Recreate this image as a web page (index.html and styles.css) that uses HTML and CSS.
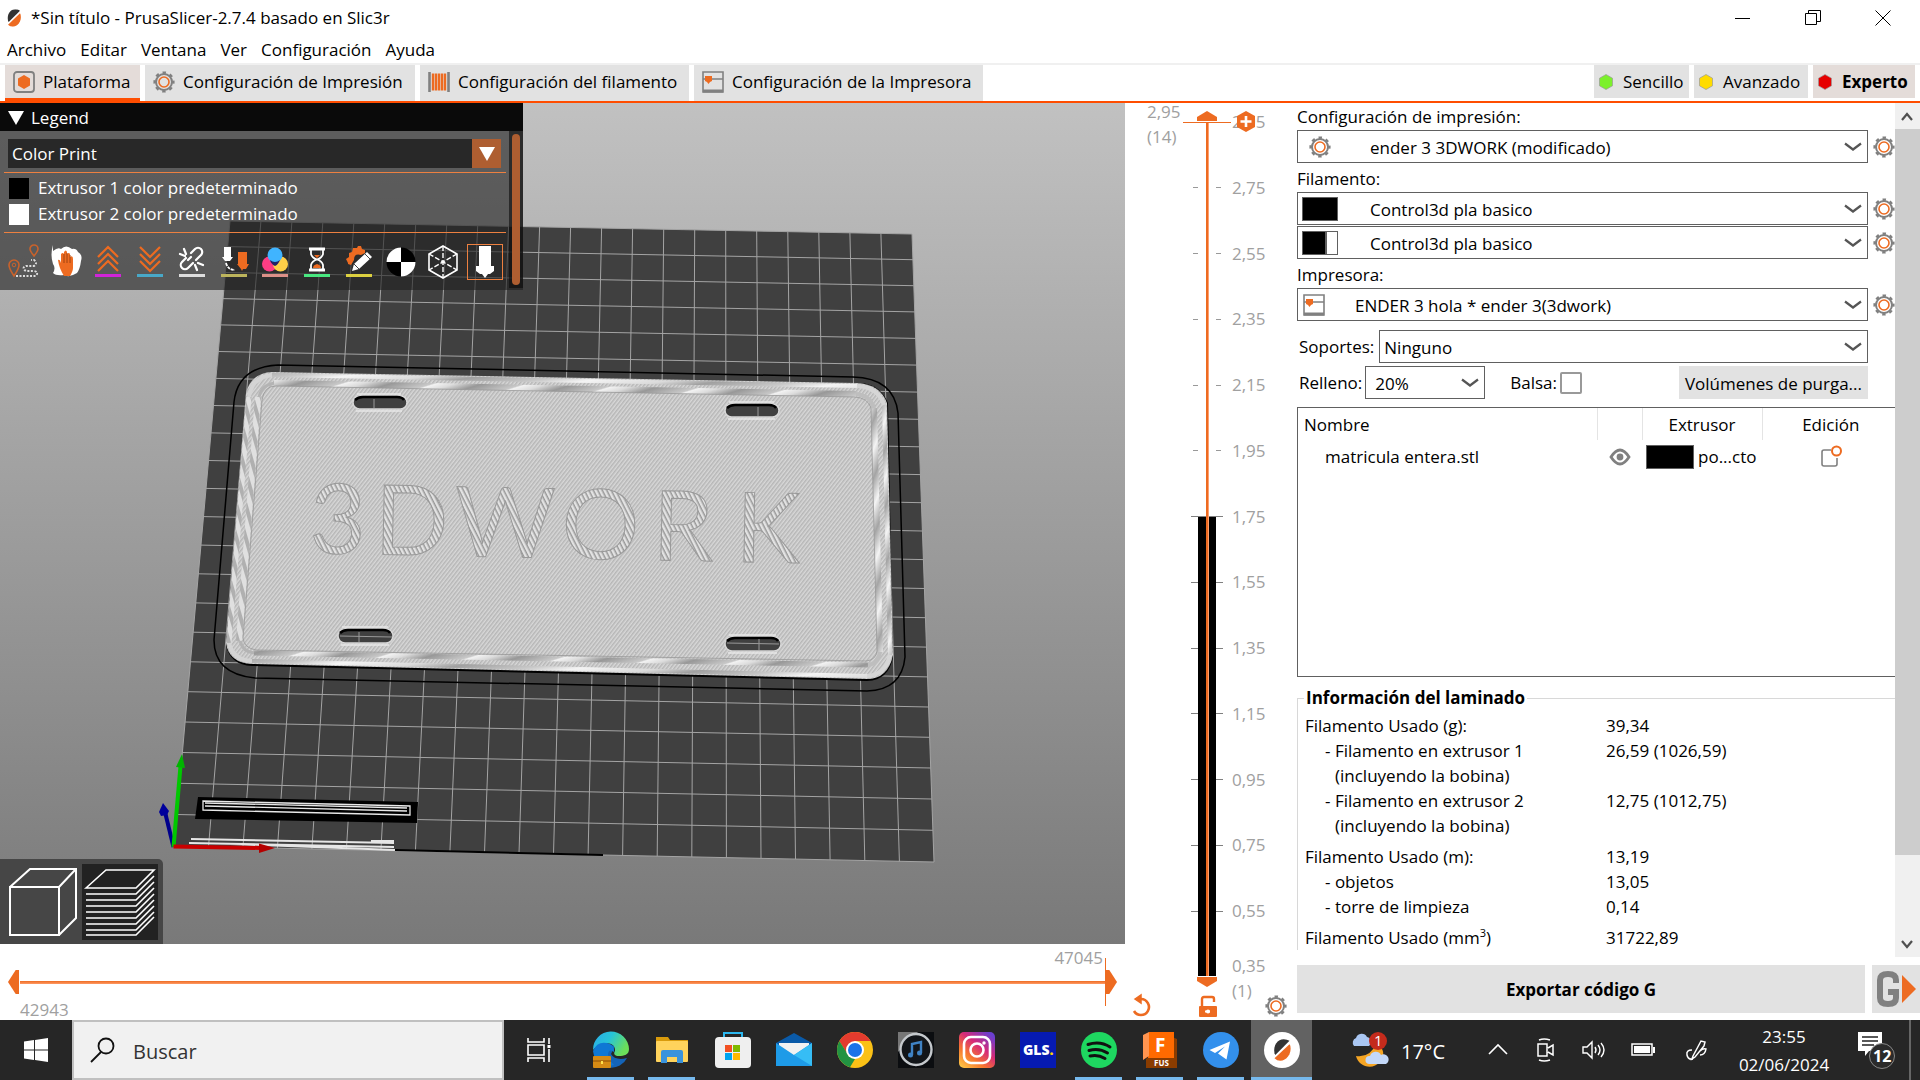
FILE: index.html
```html
<!DOCTYPE html>
<html lang="es">
<head>
<meta charset="utf-8">
<title>*Sin título - PrusaSlicer-2.7.4 basado en Slic3r</title>
<link rel="stylesheet" href="styles.css">
</head>
<body>
<svg class="defs" width="0" height="0" aria-hidden="true">
  <symbol id="gear" viewBox="0 0 22 22">
    <circle cx="11" cy="11" r="8" fill="none" stroke="#808080" stroke-width="2"/>
    <circle cx="11" cy="11" r="9.4" fill="none" stroke="#808080" stroke-width="2.4" stroke-dasharray="3.4 3.98" stroke-dashoffset="1.7"/>
    <circle cx="11" cy="11" r="5" fill="none" stroke="#ed6b21" stroke-width="1.6"/>
  </symbol>
  <symbol id="printer" viewBox="0 0 22 22">
    <path d="M1 1h20v20H1zM1 8h20" fill="none" stroke="#808080" stroke-width="1.6"/>
    <path d="M1 20h20" stroke="#808080" stroke-width="3"/>
    <path d="M3 5h7v5l-2 1-1.500 2-1.500-2-2-1z" fill="#ed6b21"/>
  </symbol>
  <symbol id="chevron" viewBox="0 0 18 10">
    <path d="M1 1.500l8 6 8-6" fill="none" stroke="#555" stroke-width="2.200"/>
  </symbol>
  <symbol id="hex" viewBox="0 0 14 16">
    <path d="M7 .5l6.500 3.700v7.600L7 15.500.5 11.800V4.200z" fill="currentColor" stroke="#999" stroke-width=".7"/>
  </symbol>
  <symbol id="prusa" viewBox="0 0 24 26">
    <path d="M3 17C1 7 7 0 14 0q4 0 7 2L4 19z" fill="#333"/>
    <path d="M22 8C24 18 17 26 10 26q-4 0-7-3L21 6z" fill="#ed6b21"/>
  </symbol>
</svg>

<header class="titlebar">
  <svg class="app-icon" viewBox="0 0 24 26"><use href="#prusa"/></svg>
  <h1 class="title">*Sin título - PrusaSlicer-2.7.4 basado en Slic3r</h1>
  <div class="window-buttons">
    <button class="win-btn" aria-label="Minimizar"><svg width="16" height="16"><path d="M0 8.500h15" stroke="#000"/></svg></button>
    <button class="win-btn" aria-label="Restaurar"><svg width="16" height="16"><path d="M.5 3.500h11v11H.5zM3.500 3.500v-3h12v11h-3.500" fill="none" stroke="#000"/></svg></button>
    <button class="win-btn" aria-label="Cerrar"><svg width="16" height="16"><path d="M.5.500l15 15M15.500.500l-15 15" stroke="#000"/></svg></button>
  </div>
</header>

<nav class="menubar">
  <a href="#">Archivo</a><a href="#">Editar</a><a href="#">Ventana</a><a href="#">Ver</a><a href="#">Configuración</a><a href="#">Ayuda</a>
</nav>

<nav class="tabs">
  <button class="tab tab-plater active">
    <svg class="ico" viewBox="0 0 22 22"><rect x="1" y="1" width="20" height="20" rx="3" fill="none" stroke="#808080" stroke-width="1.800"/><path d="M11 4l6 3.500v7L11 18l-6-3.500v-7z" fill="#ed6b21"/></svg>
    Plataforma</button>
  <button class="tab tab-print"><svg class="ico"><use href="#gear"/></svg>Configuración de Impresión</button>
  <button class="tab tab-filament">
    <svg class="ico" viewBox="0 0 22 22"><path d="M1.500 1v20M20.500 1v20" stroke="#808080" stroke-width="2.600"/><path d="M5 2.500v17M8 2.500v17M11 2.500v17M14 2.500v17M17 2.500v17" stroke="#ed6b21" stroke-width="2.400"/></svg>
    Configuración del filamento</button>
  <button class="tab tab-printer"><svg class="ico"><use href="#printer"/></svg>Configuración de la Impresora</button>
  <div class="modes">
    <button class="mode simple"><svg class="hex"><use href="#hex"/></svg>Sencillo</button>
    <button class="mode advanced"><svg class="hex"><use href="#hex"/></svg>Avanzado</button>
    <button class="mode expert active"><svg class="hex"><use href="#hex"/></svg>Experto</button>
  </div>
</nav>

<main class="workspace">
  <div class="stage">
    <section class="viewport">
      <svg class="scene" viewBox="0 103 1125 841" preserveAspectRatio="xMinYMin slice">
        <defs>
          <linearGradient id="sky" x1="0" y1="0" x2="0" y2="1"><stop offset="0" stop-color="#c1c1c1"/><stop offset="1" stop-color="#797979"/></linearGradient>
          <pattern id="infill" width="3" height="3" patternUnits="userSpaceOnUse" patternTransform="rotate(-52)">
            <rect width="3" height="3" fill="#d8d8d8"/><rect width="3" height="1.500" fill="#b6b6b6"/>
          </pattern>
          <pattern id="letter" width="4" height="4" patternUnits="userSpaceOnUse" patternTransform="rotate(62)">
            <rect width="4" height="4" fill="#e2e2e2"/><rect width="4" height="1.500" fill="#989898"/>
          </pattern>
          <pattern id="rim" width="9" height="9" patternUnits="userSpaceOnUse" patternTransform="rotate(74)">
            <rect width="9" height="9" fill="#e0e0e0"/><rect width="9" height="4" fill="#b0b0b0"/>
          </pattern>
          <linearGradient id="shineA" gradientUnits="userSpaceOnUse" x1="250" y1="370" x2="256" y2="410" spreadMethod="repeat">
            <stop offset="0" stop-color="#a0a0a0"/><stop offset=".3" stop-color="#c8c8c8"/><stop offset=".5" stop-color="#f4f4f4"/><stop offset=".8" stop-color="#dadada"/><stop offset="1" stop-color="#a0a0a0"/>
          </linearGradient>
          <linearGradient id="shineB" gradientUnits="userSpaceOnUse" x1="250" y1="370" x2="258" y2="396" spreadMethod="repeat">
            <stop offset="0" stop-color="#989898"/><stop offset=".45" stop-color="#c8c8c8"/><stop offset=".5" stop-color="#f2f2f2"/><stop offset=".7" stop-color="#dcdcdc"/><stop offset="1" stop-color="#989898"/>
          </linearGradient>
          <linearGradient id="shineC" gradientUnits="userSpaceOnUse" x1="870" y1="400" x2="880" y2="404" spreadMethod="reflect">
            <stop offset="0" stop-color="#f4f4f4"/><stop offset="1" stop-color="#a4a4a4"/>
          </linearGradient>
        </defs>
        <rect y="103" width="1125" height="841" fill="url(#sky)"/>
        <path d="M230 221L912 234 934 862 174 846z" fill="#404040"/>
        <path id="bed-grid" fill="none" stroke="#a4a4a4" stroke-width="1"/>
        <path d="M278 365L853 377Q894 378 898 413L905 657Q902 690 867 691L255 678Q214 674 214 640L234 402Q238 367 278 365z" fill="none" stroke="#000" stroke-width="1.500"/>
        <path d="M246 395L226 645Q230 665 252 666L867 681Q889 680 893 657L888 403Q880 384 860 383z" fill="#000"/>
        <path d="M272 372L857 383Q880 384 887 403L893 655Q888 679 867 679L252 664Q229 663 226 643L246 393Q251 373 272 372z" fill="url(#infill)"/>
        <g fill="none">
          <path d="M249 397L229 643" stroke="url(#rim)" stroke-width="5"/>
          <path d="M258 397L239 641" stroke="url(#rim)" stroke-width="6"/>
          <path d="M249 397Q252 377 272 375M229 643Q233 660 252 661" stroke="#d4d4d4" stroke-width="4"/>
          <path d="M259 397Q262 384 276 383M240 641Q243 652 254 653" stroke="#b4b4b4" stroke-width="3"/>
          <path d="M272 375L857 386" stroke="url(#shineA)" stroke-width="4"/>
          <path d="M274 383L856 394" stroke="url(#shineB)" stroke-width="6"/>
          <path d="M254 653L868 665" stroke="url(#shineB)" stroke-width="5"/>
          <path d="M252 661L867 676" stroke="url(#shineA)" stroke-width="4"/>
          <path d="M884 405L890 655" stroke="url(#shineC)" stroke-width="4"/>
          <path d="M874 408L880 652" stroke="url(#shineC)" stroke-width="6"/>
          <path d="M857 386Q878 387 884 405M890 655Q885 675 867 676" stroke="#d6d6d6" stroke-width="4"/>
          <path d="M856 394Q870 395 874 408M880 652Q878 664 868 665" stroke="#bebebe" stroke-width="4"/>
          <path d="M276 386L855 397Q868 398 871 408L877 651Q876 660 866 661L256 650Q244 648 243 638L262 400Q264 386 276 386z" stroke="#989898" stroke-width=".8"/>
        </g>
        <g fill="#404040" stroke="#d8d8d8" stroke-width="1.500">
          <rect x="353" y="396" width="54" height="13" rx="6.500"/><rect x="338" y="629" width="55" height="14" rx="7"/>
          <rect x="725" y="404" width="54" height="13" rx="6.500"/><rect x="725" y="637" width="56" height="14" rx="7"/>
        </g>
        <path d="M357 394h44M356 411h46M342 627h46M341 645h48M729 402h45M728 419h47M729 635h47M728 653h49" stroke="#e8e8e8" stroke-width="1.500"/>
        <path d="M355 400q3-3 8-3h34q5 0 7 3M340 633q3-3 8-3h35q5 0 7 3M727 408q3-3 8-3h34q5 0 7 3M727 641q3-3 8-3h36q5 0 7 3" fill="none" stroke="#000" stroke-width="2.500"/>
        <path d="M374 399v9M359 632v10M340 636l52 1M758 407v9M759 639v11M727 643l52 1" stroke="#999"/>
        <g transform="rotate(1.200 313 553)">
          <text class="emboss" x="309 374 454 561 652 735" y="553">3DWORK</text>
        </g>
        <path d="M198 797L418 802 417 823 195 819z" fill="#000"/>
        <path d="M203 801L410 806V815L203 810zM205 803l202 5M205 806l202 5" fill="none" stroke="#e8e8e8" stroke-width="1.300"/>
        <path d="M191 839l203 4M189 843l205 4M230 844l165 6M371 841h23" stroke="#e6e6e6" stroke-width="2"/>
        <path d="M395 850l208 5" stroke="#000" stroke-width="2"/>
        <path d="M173.500 847L165 812" stroke="#00008c" stroke-width="4"/><path d="M159 812l4-9 6 8-2 4-6 1z" fill="#00009c"/>
        <path d="M173.500 847L180.500 766" stroke="#00c800" stroke-width="4"/><path d="M176 767l6-13 3 14z" fill="#00b400"/>
        <path d="M173.500 846.500L262 848" stroke="#c80000" stroke-width="4"/><path d="M259 843.500l16 4.500-16 5z" fill="#b40000"/>
      </svg>

      <aside class="legend">
        <h2 class="legend-title"><svg width="16" height="14"><path d="M0 0h16l-8 14z" fill="#fff"/></svg>Legend</h2>
        <div class="legend-body">
          <div class="legend-content">
            <div class="legend-combo">
              <select aria-label="Vista"><option>Color Print</option></select>
              <span class="legend-arrow"><svg width="16" height="14"><path d="M0 0h16l-8 14z" fill="#fff"/></svg></span>
            </div>
            <ul class="legend-list">
              <li><i class="sw black"></i>Extrusor 1 color predeterminado</li>
              <li><i class="sw white"></i>Extrusor 2 color predeterminado</li>
            </ul>
            <div class="legend-tools">
              <button aria-label="Recorrido"><svg viewBox="0 0 34 34"><path d="M7 31c-4-6-5-8-5-11a5 5 0 0 1 10 0c0 3-1 5-5 11zM27 11c-3-4-4-5-4-7a4 4 0 0 1 8 0c0 2-1 3-4 7z" fill="none" stroke="#c8622c" stroke-width="1.600"/><circle cx="7" cy="20" r="1.800" fill="none" stroke="#c8622c"/><path d="M9 31h20q3-4-2-5h-8q-5-3 0-5h8q4-3 0-6h-3" fill="none" stroke="#ddd" stroke-width="2" stroke-dasharray="2 1.500"/></svg></button>
              <button aria-label="Limpieza"><svg viewBox="0 0 34 34"><path d="M4 6Q9 2 12 4q5-5 11 0 4-1 6 3 5 3 3 9-1 8-4 12-8 5-13 2-8 1-11-2 3-5 0-9-3-9 0-19z" fill="#fff"/><path d="M9 15q2-1 3 3V9q2-2 3 0V7q2-3 3 0v2q2-2 3 0v3q3-2 3 2v9q0 3-3 8h-6q-5-8-6-16z" fill="#ed6b21"/><path d="M15 9v9M18 8v10M21 10v8" stroke="#a04510"/></svg></button>
              <button aria-label="Retracciones"><svg viewBox="0 0 34 34"><path d="M7 12L17 2l10 10M7 19L17 9l10 10M7 26l10-10 10 10" fill="none" stroke="#ed6b21" stroke-width="2.200"/><path d="M4 30.500h26" stroke="#d024d8" stroke-width="3"/></svg></button>
              <button aria-label="Desretracciones"><svg viewBox="0 0 34 34"><path d="M7 2l10 10L27 2M7 9l10 10L27 9M7 16l10 10 10-10" fill="none" stroke="#ed6b21" stroke-width="2.200"/><path d="M4 30.500h26" stroke="#48a8c8" stroke-width="3"/></svg></button>
              <button aria-label="Costuras"><svg viewBox="0 0 34 34"><path d="M16 8l4-4a4 4 0 0 1 6 6l-5 5M18 18l-5 5a4 4 0 0 1-6-6l4-4M13 15l3-3M9 4l2 5M5 9l5 2M23 18l5 2M20 20l2 5" fill="none" stroke="#fff" stroke-width="2.200" stroke-linecap="round"/><path d="M4 30.500h26" stroke="#ddd" stroke-width="3"/></svg></button>
              <button aria-label="Cambios de herramienta"><svg viewBox="0 0 34 34"><path d="M7 2h7v10h2l-3 4h-5L5 12h2z" fill="#fff"/><path d="M21 7h9v12h2l-3 5h-3l-1 2-1-2-4-5h1z" fill="#ed6b21"/><path d="M9 18q2 7 9 7" fill="none" stroke="#fff" stroke-width="1.800" stroke-dasharray="3 1"/><path d="M4 30.500h26" stroke="#bcb45c" stroke-width="3"/></svg></button>
              <button aria-label="Cambios de color"><svg viewBox="0 0 34 34"><circle cx="11.500" cy="19" r="7.500" fill="#ff3d84"/><circle cx="22.500" cy="19" r="7.500" fill="#ffcf48"/><circle cx="17" cy="10" r="7.500" fill="#40b4ff"/><path d="M12 15q5 4 10 0-2 5-5 6-4-2-5-6z" fill="#226"/><path d="M4 30.500h26" stroke="#dc9088" stroke-width="3"/></svg></button>
              <button aria-label="Pausas"><svg viewBox="0 0 34 34"><path d="M9 4h16M9 25h16" stroke="#fff" stroke-width="3"/><path d="M11 5v4q1 4 6 5.500Q22 13 23 9V5M11 24v-4q1-4 6-5.500 5 1.500 6 5.500v4" fill="none" stroke="#fff" stroke-width="1.800"/><path d="M14 10h6l-3 3zM13 23q0-3 4-4 4 1 4 4z" fill="#ed6b21"/><path d="M4 30.500h26" stroke="#48e880" stroke-width="3"/></svg></button>
              <button aria-label="Código G personalizado"><svg viewBox="0 0 34 34"><path d="M6 18l-2-4 3-2V8l3-1 1-4h4l1-2h3l1 3 3 1v3l-4 2q-7-2-7 5l-3 5-3-1z" fill="#ed6b21"/><path d="M10 26l2-7L25 7l5 5-13 12z" fill="#fff"/><path d="M12 19l5 5M23 9l5 5" stroke="#444"/><path d="M4 30.500h26" stroke="#dcd040" stroke-width="3"/></svg></button>
              <button aria-label="Centro de gravedad"><svg viewBox="0 0 34 34"><circle cx="17" cy="17" r="14.500" fill="#000"/><path d="M17 17V2.500A14.500 14.500 0 0 0 2.500 17zM17 17v14.500A14.500 14.500 0 0 0 31.500 17z" fill="#fff"/></svg></button>
              <button aria-label="Carcasas"><svg viewBox="0 0 34 34"><path d="M17 1l14 8v16l-14 8-14-8V9z" fill="none" stroke="#fff" stroke-width="1.600"/><path d="M17 1v32M3 9l28 16M31 9L3 25" stroke="#fff" stroke-width="1.400" stroke-dasharray="5 2"/></svg></button>
              <button class="selected" aria-label="Marcador de herramienta"><svg viewBox="0 0 34 34"><path d="M11 1h12v20h3v5l-4 3h-2l-3 4-3-4h-2l-4-3v-5h3z" fill="#fff"/></svg></button>
            </div>
          </div>
          <div class="legend-scroll"></div>
        </div>
      </aside>

      <div class="view-switch">
        <button aria-label="Vista de editor 3D"><svg viewBox="0 0 76 76"><path d="M7 23h49v48H7zM7 23L27 5h46v49L56 71M56 23L73 5" fill="none" stroke="#fff" stroke-width="2"/></svg></button>
        <button class="on" aria-label="Previsualización"><svg viewBox="0 0 76 76"><path d="M4 24L24 6h48L54 24zM4 30h50l18-18M4 36h50l18-18M4 42h50l18-18M4 48h50l18-18M4 54h50l18-18M4 60h50l18-18M4 66h50l18-18M4 71h50l18-18" fill="none" stroke="#fff" stroke-width="1.600"/></svg></button>
      </div>
    </section>

    <section class="moves">
      <output class="moves-max">47045</output>
      <div class="moves-track">
        <input class="range range-low" type="range" min="0" max="100" value="0" aria-label="Primer movimiento">
        <input class="range range-high" type="range" min="0" max="100" value="100" aria-label="Último movimiento">
      </div>
      <output class="moves-min">42943</output>
    </section>
  </div>

  <section class="layers">
    <div class="layers-top"><span>2,95</span><span>(14)</span></div>
    <div class="layers-scale">
      <ol class="ticks">
        <li>2,95</li><li>2,75</li><li>2,55</li><li>2,35</li><li>2,15</li><li>1,95</li>
        <li class="wide">1,75</li><li class="wide">1,55</li><li class="wide">1,35</li><li class="wide">1,15</li><li class="wide">0,95</li><li class="wide">0,75</li><li class="wide">0,55</li>
      </ol>
      <div class="layers-bottom"><span>0,35</span><span>(1)</span></div>
      <div class="layer-track">
        <div class="layer-fill"></div>
        <input class="vrange vrange-high" type="range" min="0" max="100" value="100" aria-label="Capa superior">
        <input class="vrange vrange-low" type="range" min="0" max="100" value="0" aria-label="Capa inferior">
      </div>
      <button class="add-tick" aria-label="Añadir cambio de color"><svg viewBox="0 0 20 22"><path d="M10 0l9 5v11l-9 5-9-5V5z" fill="#ed6b21"/><path d="M10 5v11M4.500 10.500h11" stroke="#fff" stroke-width="2.600"/></svg></button>
    </div>
    <div class="layers-tools">
      <button aria-label="Deshacer"><svg viewBox="0 0 22 24"><path d="M3 17a8 8 0 1 0 7-12" fill="none" stroke="#ed6b21" stroke-width="2.600"/><path d="M4 5l6-4v8z" fill="#ed6b21" stroke="#ed6b21" stroke-width="1.500"/></svg></button>
      <button aria-label="Bloquear"><svg viewBox="0 0 22 24"><rect x="1" y="12" width="18" height="11" rx="1" fill="#ed6b21"/><path d="M4 12V5q0-2 2-2h8q2 0 2 2v3" fill="none" stroke="#ed6b21" stroke-width="2.400"/><path d="M7 17.500h5" stroke="#fff" stroke-width="2"/><circle cx="10" cy="17.500" r="2" fill="#fff"/></svg></button>
      <button aria-label="Ajustes"><svg><use href="#gear"/></svg></button>
    </div>
  </section>

  <section class="sidebar">
    <div class="scroll">
      <div class="content">
        <label class="lbl first" for="print">Configuración de impresión:</label>
        <div class="row">
          <div class="combo preset"><select id="print"><option>ender 3 3DWORK (modificado)</option></select><svg class="pic inset"><use href="#gear"/></svg><svg class="chev"><use href="#chevron"/></svg></div>
          <button class="cog" aria-label="Editar impresión"><svg><use href="#gear"/></svg></button>
        </div>
        <label class="lbl" for="fil1">Filamento:</label>
        <div class="row">
          <div class="combo preset"><select id="fil1"><option>Control3d pla basico</option></select><i class="swatch"></i><svg class="chev"><use href="#chevron"/></svg></div>
          <button class="cog" aria-label="Editar filamento 1"><svg><use href="#gear"/></svg></button>
        </div>
        <div class="row second">
          <div class="combo preset"><select aria-label="Filamento 2"><option>Control3d pla basico</option></select><i class="swatch split"></i><svg class="chev"><use href="#chevron"/></svg></div>
          <button class="cog" aria-label="Editar filamento 2"><svg><use href="#gear"/></svg></button>
        </div>
        <label class="lbl" for="prt">Impresora:</label>
        <div class="row">
          <div class="combo printer"><select id="prt"><option>ENDER 3 hola * ender 3(3dwork)</option></select><svg class="pic"><use href="#printer"/></svg><svg class="chev"><use href="#chevron"/></svg></div>
          <button class="cog" aria-label="Editar impresora"><svg><use href="#gear"/></svg></button>
        </div>
        <div class="opts supports">
          <label for="sup">Soportes:</label>
          <div class="combo"><select id="sup"><option>Ninguno</option></select><svg class="chev"><use href="#chevron"/></svg></div>
        </div>
        <div class="opts infill">
          <label for="inf">Relleno:</label>
          <div class="combo short"><select id="inf"><option>20%</option></select><svg class="chev"><use href="#chevron"/></svg></div>
          <label class="brim" for="brim">Balsa:</label>
          <input class="check" id="brim" type="checkbox">
          <button class="purge">Volúmenes de purga...</button>
        </div>
        <div class="objects">
          <table>
            <thead><tr><th class="c-name">Nombre</th><th class="c-eye"></th><th class="c-ext">Extrusor</th><th class="c-edit">Edición</th></tr></thead>
            <tbody><tr>
              <td class="name">matricula entera.stl</td>
              <td><svg width="22" height="18" viewBox="0 0 22 18"><path d="M2 9q9-14 18 0-9 14-18 0z" fill="none" stroke="#808080" stroke-width="2.800"/><circle cx="11" cy="9" r="3.400" fill="#808080"/></svg></td>
              <td><span class="ext"><i class="ext-sw"></i>po...cto</span></td>
              <td class="c-edit"><svg width="22" height="22" viewBox="0 0 22 22"><path d="M11 4H4q-2 0-2 2v12q0 2 2 2h11q2 0 2-2v-6" fill="none" stroke="#808080" stroke-width="1.600"/><circle cx="16.500" cy="5" r="4.500" fill="none" stroke="#ed6b21" stroke-width="2"/></svg></td>
            </tr></tbody>
          </table>
        </div>
        <fieldset class="info">
          <legend>Información del laminado</legend>
          <table>
            <tr><th>Filamento Usado (g):</th><td>39,34</td></tr>
            <tr><th class="sub">- Filamento en extrusor 1<span class="note">(incluyendo la bobina)</span></th><td>26,59 (1026,59)</td></tr>
            <tr><th class="sub">- Filamento en extrusor 2<span class="note">(incluyendo la bobina)</span></th><td>12,75 (1012,75)</td></tr>
            <tr class="group"><th>Filamento Usado (m):</th><td>13,19</td></tr>
            <tr><th class="sub">- objetos</th><td>13,05</td></tr>
            <tr><th class="sub">- torre de limpieza</th><td>0,14</td></tr>
            <tr class="group"><th>Filamento Usado (mm<sup>3</sup>)</th><td>31722,89</td></tr>
          </table>
        </fieldset>
      </div>
      <div class="scrollbar">
        <svg viewBox="0 0 24 26"><path d="M7 17l5-6 5 6" fill="none" stroke="#505050" stroke-width="2.200"/></svg>
        <div class="thumb"></div>
        <svg class="down" viewBox="0 0 24 26"><path d="M7 10l5 6 5-6" fill="none" stroke="#505050" stroke-width="2.200"/></svg>
      </div>
    </div>
    <div class="actions">
      <button class="export">Exportar código G</button>
      <button class="send" aria-label="Enviar código G"><svg viewBox="0 0 48 48"><path d="M24 18v-3q0-6-8-6t-8 6v18q0 6 8 6t8-6v-6h-8" fill="none" stroke="#808080" stroke-width="6"/><path d="M30 10l14 14-14 14z" fill="#ed6b21"/></svg></button>
    </div>
  </section>
</main>

<footer class="taskbar">
  <button class="start" aria-label="Inicio"><svg width="24" height="24" viewBox="0 0 24 24"><path d="M0 3.500L10 2v9.500H0zM11 2l13-2v11.500H11zM0 12.500h10V22L0 20.500zM11 12.500h13V24l-13-2z" fill="#fff"/></svg></button>
  <label class="search"><svg width="26" height="26" viewBox="0 0 26 26"><circle cx="16" cy="9" r="7.500" fill="none" stroke="#111" stroke-width="1.800"/><path d="M11 15L1 25" stroke="#111" stroke-width="1.800"/></svg><input type="text" placeholder="Buscar" aria-label="Buscar"></label>
  <div class="apps">
    <button class="app taskview" aria-label="Vista de tareas"><svg viewBox="0 0 36 36"><path d="M7 6v4h16V6M7 30v-4h16v4M7 13h16v10H7zM28 6v6M28 17v13" fill="none" stroke="#fff" stroke-width="1.600"/><rect x="26.500" y="13" width="3" height="3" fill="#fff"/></svg></button>
    <button class="app open" aria-label="Edge"><svg viewBox="0 0 36 36"><defs><linearGradient id="edge" x1="0" x2="1" y1="0" y2=".4"><stop offset="0" stop-color="#2aa9e8"/><stop offset=".5" stop-color="#27c4d8"/><stop offset="1" stop-color="#6be05a"/></linearGradient></defs><path d="M34 26a17 17 0 0 1-32-4l6-12 14 4-4 8q4 7 16 4z" fill="#1464b8"/><path d="M0 18A18 18 0 0 1 36 17c0 6-5 7-10 7-4 0-6-2-4-5 1-9-12-11-22-1z" fill="url(#edge)"/><path d="M0 19q4-10 14-8 8 2 7 9-5-4-6 2 0 5 6 11Q3 38 0 19z" fill="#0f78d4"/><rect y="24" width="18" height="12" rx="1" fill="#d68b14"/><path d="M0 29h18" stroke="#8a4f08"/><rect x="8" y="29" width="2" height="3" fill="#ffe14a"/></svg></button>
    <button class="app open" aria-label="Explorador"><svg viewBox="0 0 36 36"><path d="M2 5h12l2 3h18v6H2z" fill="#d99b0c"/><rect x="2" y="9" width="32" height="21" rx="1" fill="#ffd35c"/><path d="M7 31V20q0-2 2-2h18q2 0 2 2v11h-6v-6H13v6z" fill="#3a93dc"/></svg></button>
    <button class="app" aria-label="Store"><svg viewBox="0 0 36 36"><path d="M9 8V1h18v7" fill="none" stroke="#2cb8f0" stroke-width="2"/><rect y="5" width="36" height="31" rx="4" fill="#efefef"/><path d="M10 13h7v7h-7z" fill="#f25022"/><path d="M18 13h7v7h-7z" fill="#7fba00"/><path d="M10 21h7v7h-7z" fill="#00a4ef"/><path d="M18 21h7v7h-7z" fill="#ffb900"/></svg></button>
    <button class="app" aria-label="Correo"><svg viewBox="0 0 36 36"><path d="M0 11L18 1l18 10v22H0z" fill="#0a5aa8"/><path d="M3 11h30v12H3z" fill="#f2f2f2"/><path d="M0 11l18 12L36 11v23H0z" fill="#1e9be8"/><path d="M18 23l18-12v23z" fill="#36bdf5"/></svg></button>
    <button class="app" aria-label="Chrome"><svg viewBox="0 0 36 36"><circle cx="18" cy="18" r="18" fill="#fbc116"/><path d="M2.400 9A18 18 0 0 1 33.600 9H18l-7 14z" fill="#e33b2e"/><path d="M2.400 9l8.800 14 6.800 4-5 8.300A18 18 0 0 1 2.400 9z" fill="#229342"/><circle cx="18" cy="18" r="9" fill="#fff"/><circle cx="18" cy="18" r="7" fill="#1a73e8"/></svg></button>
    <button class="app" aria-label="Música"><svg viewBox="0 0 36 36"><rect width="36" height="36" fill="#0b0d10"/><path d="M0 0h20L0 20z" fill="#777"/><circle cx="18" cy="17.500" r="15.500" fill="#121519" stroke="#c4c8cc" stroke-width="2.400"/><path d="M14 23V12l9-2v11" fill="none" stroke="#3f82c4" stroke-width="2.400"/><circle cx="12.500" cy="23" r="2.500" fill="#3f82c4"/><circle cx="21.500" cy="21" r="2.500" fill="#3f82c4"/></svg></button>
    <button class="app" aria-label="Instagram"><svg viewBox="0 0 36 36"><defs><linearGradient id="insta" x1="0" y1="1" x2=".8" y2="0"><stop offset="0" stop-color="#ffd24a"/><stop offset=".35" stop-color="#f7772e"/><stop offset=".65" stop-color="#d62a78"/><stop offset="1" stop-color="#6a3fd0"/></linearGradient></defs><rect width="36" height="36" rx="5" fill="url(#insta)"/><rect x="5" y="5" width="26" height="26" rx="7" fill="none" stroke="#fff" stroke-width="2.600"/><circle cx="18" cy="18" r="6.500" fill="none" stroke="#fff" stroke-width="2.600"/><circle cx="25" cy="11" r="1.700" fill="#fff"/></svg></button>
    <button class="app" aria-label="GLS"><svg viewBox="0 0 36 36"><rect width="36" height="36" fill="#061ab1"/><text class="gls" x="3" y="23">GLS<tspan fill="#ffd100">.</tspan></text></svg></button>
    <button class="app open" aria-label="Spotify"><svg viewBox="0 0 36 36"><circle cx="18" cy="18" r="18" fill="#1ed760"/><path d="M7 12.500q12-4 22 2.500M8 18.500q10-3 18.500 2.500M9 24q8-2 15 2.500" fill="none" stroke="#111" stroke-width="3" stroke-linecap="round"/></svg></button>
    <button class="app open" aria-label="Fusion"><svg viewBox="0 0 36 36"><path d="M30 5l5 2v29H4V27z" fill="#8a3c00"/><path d="M7 0h25v26H6z" fill="#ff6a00"/><path d="M1 3l6-3v24l-6 4z" fill="#ff9450"/><text class="fus-f" x="13" y="20">F</text><text class="fus" x="12" y="34">FUS</text></svg></button>
    <button class="app open" aria-label="Telegram"><svg viewBox="0 0 36 36"><circle cx="18" cy="18" r="18" fill="#3390ec"/><path d="M6.500 18L27 9.500l-3.500 18-8.500-6 7-7-10 6.500z" fill="#fff"/></svg></button>
    <button class="app open current" aria-label="PrusaSlicer"><svg viewBox="0 0 36 36"><circle cx="18" cy="18" r="18" fill="#fff"/><use href="#prusa" x="8" y="5" width="20" height="26"/></svg></button>
  </div>
  <div class="tray">
    <button class="weather" aria-label="Tiempo">
      <svg width="38" height="36" viewBox="0 0 38 36"><path d="M5 24q14 2 20-12c10 4 8 14 4 18-8 9-22 4-24-6z" fill="#f5a524"/><path d="M3 14a5 5 0 0 1 2-8 6 6 0 0 1 11-1 5 5 0 0 1 2 9z" fill="#a9c6f2"/><path d="M18 32a4 4 0 0 1 1-8 6 6 0 0 1 11-1 5 5 0 0 1 5 9z" fill="#c3d8f8"/><circle cx="27" cy="9" r="9" fill="#c42b1c"/><text class="badge" x="23" y="14">1</text></svg>
      <span>17°C</span></button>
    <button class="t-up" aria-label="Iconos ocultos"><svg width="20" height="20"><path d="M1 14l9-9 9 9" fill="none" stroke="#fff" stroke-width="1.600"/></svg></button>
    <button class="t-cam" aria-label="Reunirse"><svg width="20" height="24"><path d="M2 6h9v12H2zM12 10l5-3v10l-5-3M3 2q5-2 11 0M3 22q5 2 11 0" fill="none" stroke="#fff" stroke-width="1.500"/></svg></button>
    <button class="t-vol" aria-label="Volumen"><svg width="24" height="20"><path d="M1 7h4l5-5v16l-5-5H1zM13 7q2 3 0 6M16 5q4 5 0 10M19 3q6 7 0 14" fill="none" stroke="#fff" stroke-width="1.400"/></svg></button>
    <button class="t-bat" aria-label="Batería"><svg width="24" height="14"><rect x="1" y="1" width="20" height="11" fill="none" stroke="#fff" stroke-width="1.500"/><rect x="3" y="3" width="16" height="7" fill="#fff"/><path d="M23 4v6" stroke="#fff" stroke-width="2"/></svg></button>
    <button class="t-pen" aria-label="Lápiz"><svg width="22" height="22"><path d="M7 17L15 2l4 1-1 4-9 11-3 2zM1 16q-1-5 5-5M1 16q1 5 6 4M14 12q3-3 6-2-1 6-6 6" fill="none" stroke="#fff" stroke-width="1.500"/></svg></button>
    <button class="clock"><time>23:55</time><time>02/06/2024</time></button>
    <button class="notes" aria-label="Notificaciones"><svg width="38" height="38" viewBox="0 0 38 38"><path d="M1 1h24v19H12l-4 5v-5H1z" fill="#fff"/><path d="M5 6h16M5 10h16M5 14h12" stroke="#222" stroke-width="1.300"/><circle cx="25" cy="25" r="12.500" fill="#2b2b2b" stroke="#888"/><text class="count" x="16" y="31">12</text></svg></button>
    <button class="peek" aria-label="Mostrar escritorio"></button>
  </div>
</footer>
<script src="bed.js"></script>
</body>
</html>
```
FILE: styles.css
```css
* { box-sizing: border-box; }
body {
  margin: 0;
  min-height: 100vh;
  display: flex;
  flex-direction: column;
  background: #fff;
  color: #000;
  font: 17px/24px "Open Sans", "Noto Sans", sans-serif;
}
button, input, select { font: inherit; color: inherit; margin: 0; padding: 0; border: 0; background: none; border-radius: 0; }
button { display: flex; align-items: center; white-space: nowrap; }
svg { display: block; flex: none; overflow: visible; }
.defs { position: absolute; }
ul, ol { margin: 0; padding: 0; list-style: none; }

.titlebar { display: flex; align-items: center; height: 35px; padding-left: 6px; }
.app-icon { width: 16px; height: 18px; }
.title { margin: 0 auto 0 9px; font-size: 17px; font-weight: 400; }
.window-buttons { display: flex; margin-right: 2px; }
.win-btn { width: 70px; height: 35px; justify-content: center; }

.menubar { display: flex; gap: 14px; height: 30px; padding: 3px 7px 0; border-bottom: 2px solid #f0f0f0; }
.menubar a { color: inherit; text-decoration: none; }

.tabs { display: flex; gap: 5px; height: 38px; padding: 0 5px; border-bottom: 2px solid #ff4d00; }
.tab { gap: 8px; padding: 0 0 2px 8px; background: #e2e2e2; }
.tab.active { background: #e4dcd9; box-shadow: inset 0 -3px #ff4d00; }
.tab-plater { width: 135px; }
.tab-print { width: 270px; }
.tab-filament { width: 269px; }
.tab-printer { width: 289px; }
.ico { width: 22px; height: 22px; }
.modes { display: flex; gap: 5px; margin-left: auto; height: 33px; }
.mode { gap: 10px; padding: 1px 0 0 5px; background: #e2e2e2; }
.mode.simple { width: 95px; }
.mode.advanced { width: 114px; }
.mode.expert { width: 102px; background: #e4dcd9; font-weight: 700; }
.hex { width: 14px; height: 16px; }
.simple .hex { color: #7cf02c; }
.advanced .hex { color: #ffdc00; }
.expert .hex { color: #e60000; }

.workspace { flex: 1; display: grid; grid-template-columns: minmax(0, 1fr) 172px 623px; min-height: 917px; }
.stage { display: flex; flex-direction: column; }
.viewport { position: relative; flex: 1; overflow: hidden; }
.scene { position: absolute; inset: 0; width: 100%; height: 100%; overflow: hidden; }
.emboss { font: 400 97px Lato, "Open Sans", sans-serif; fill: url(#letter); stroke: #999; stroke-width: 1; }

.legend { position: absolute; top: 0; left: 0; width: 523px; color: #fff; line-height: 26px; }
.legend-title { display: flex; align-items: center; gap: 7px; height: 28px; margin: 0; padding: 2px 0 0 8px; background: #0a0a0a; font-size: 17px; font-weight: 400; }
.legend-body { display: flex; background: rgba(31, 31, 31, .61); padding-bottom: 2px; }
.legend-content { flex: 1; padding: 8px 3px 9px 4px; }
.legend-combo { display: flex; margin: 0 5px 4px 4px; height: 29px; }
.legend-combo select { flex: 1; appearance: none; padding-left: 4px; background: #282828; }
.legend-arrow { display: flex; align-items: center; justify-content: center; width: 29px; background: #ae5e31; }
.legend-list { border: solid #ed8040; border-width: 1px 0; padding: 2px 5px 5px; }
.legend-list li { display: flex; align-items: center; gap: 9px; height: 26px; }
.sw { width: 20px; height: 21px; }
.sw.black { background: #000; }
.sw.white { background: #fff; }
.legend-tools { display: flex; justify-content: space-between; padding: 12px 4px 0 3px; }
.legend-tools button { width: 34px; height: 34px; }
.legend-tools svg { width: 34px; height: 34px; }
.legend-tools .selected { outline: 1px solid #ed8040; }
.legend-scroll { width: 14px; padding: 3px; background: rgba(10, 10, 10, .6); }
.legend-scroll::before { content: ""; display: block; height: 100%; border-radius: 5px; background: #ae5e31; }

.view-switch { position: absolute; left: 0; bottom: 0; display: flex; gap: 3px; padding: 5px 5px 4px 3px; background: #464646; border-radius: 0 5px 0 0; }
.view-switch svg { width: 76px; height: 76px; }
.view-switch .on { background: #222; }

.moves { height: 76px; padding: 2px 8px 0; color: #a0a0a0; display: flex; flex-direction: column; }
.moves-max { align-self: flex-end; margin-right: 14px; }
.moves-min { margin: 4px 12px 0; }
.moves-track { position: relative; flex: none; height: 24px; background: linear-gradient(#ed6b21, #ff9a66) center / calc(100% - 24px) 3px no-repeat; }
.moves-track::after { content: ""; position: absolute; right: 11px; top: -12px; bottom: -12px; width: 1px; background: #ed6b21; }
.range { position: absolute; inset: 0; width: 100%; height: 24px; appearance: none; }
.range::-webkit-slider-thumb { appearance: none; width: 11px; height: 24px; background: #ed6b21; }
.range-low::-webkit-slider-thumb { clip-path: polygon(100% 0, 70% 0, 0 50%, 70% 100%, 100% 100%); }
.range-high::-webkit-slider-thumb { clip-path: polygon(0 0, 30% 0, 100% 50%, 30% 100%, 0 100%); }

.layers { display: grid; grid-template-columns: 66px 1fr; grid-template-rows: 1fr 17px; color: #a0a0a0; }
.layers-top { display: flex; flex-direction: column; padding-left: 22px; margin-top: -4px; line-height: 25px; }
.layers-scale { position: relative; display: flex; flex-direction: column; }
.ticks { flex: 1; display: flex; flex-direction: column; justify-content: space-between; padding-top: 7px; }
.ticks li { display: flex; align-items: center; height: 24px; }
.ticks li::before { content: ""; width: 32px; height: 1px; margin-right: 9px; background: linear-gradient(90deg, transparent 2px, #999 2px 7px, transparent 7px 25px, #999 25px 30px, transparent 30px); }
.ticks li.wide::before { background: #808080; }
.layers-bottom { display: flex; flex-direction: column; padding: 30px 0 0 41px; line-height: 25px; }
.layer-track { position: absolute; left: 6px; top: 8px; bottom: 16px; width: 20px; background: linear-gradient(90deg, #ed6b21, #ed6b21 66%, #ffa070 66%) 9px 11px / 3px calc(100% - 22px) no-repeat; }
.layer-track::before { content: ""; position: absolute; top: 11px; left: -14px; width: 48px; height: 1px; background: #ed6b21; }
.layer-fill { position: absolute; left: 1px; top: calc(46% + 3px); bottom: 11px; width: 18px; background: linear-gradient(90deg, #000 8px, #ed6b21 8px 10px, #ffa070 10px 11px, #000 11px); }
.vrange { position: absolute; inset: 0; width: 20px; height: 100%; appearance: none; writing-mode: vertical-lr; direction: rtl; }
.vrange::-webkit-slider-thumb { appearance: none; width: 20px; height: 10px; background: #ed6b21; }
.vrange-high::-webkit-slider-thumb { clip-path: polygon(50% 0, 100% 60%, 100% 100%, 0 100%, 0 60%); }
.vrange-low::-webkit-slider-thumb { clip-path: polygon(0 0, 100% 0, 100% 40%, 50% 100%, 0 40%); }
.add-tick { position: absolute; left: 45px; top: 8px; }
.add-tick svg { width: 20px; height: 22px; }
.layers-tools { grid-column: 1 / -1; display: flex; align-items: flex-end; justify-content: space-between; padding: 0 10px 2px 6px; }
.layers-tools svg { width: 22px; height: 24px; }

.sidebar { display: flex; flex-direction: column; min-width: 0; }
.scroll { flex: 1; display: flex; min-height: 0; }
.content { flex: 1; min-width: 0; overflow: hidden; }
.lbl { display: block; height: 29px; line-height: 31px; }
.lbl.first { height: 27px; line-height: 28px; }
.row { display: grid; grid-template-columns: 1fr 22px; gap: 5px; align-items: center; }
.row.second { margin-top: 1px; }
.cog svg, .pic { width: 22px; height: 22px; }
.combo { display: grid; align-items: center; height: 33px; border: 1px solid #606060; }
.combo > * { grid-area: 1 / 1; }
.combo select { appearance: none; width: 100%; height: 31px; padding: 2px 0 0 4px; }
.preset select { padding-left: 72px; }
.printer select { padding-left: 57px; }
.combo .chev { width: 18px; height: 10px; justify-self: end; margin-right: 5px; pointer-events: none; }
.pic { margin-left: 5px; pointer-events: none; }
.pic.inset { margin-left: 11px; }
.swatch { width: 36px; height: 24px; margin-left: 4px; background: #000; border: 1px solid #606060; pointer-events: none; }
.swatch.split { background: linear-gradient(90deg, #000 22px, #606060 22px 24px, #fff 24px); }
.opts { display: flex; align-items: center; margin-right: 27px; padding-left: 2px; }
.supports { margin-top: 9px; }
.supports .combo { flex: 1; margin-left: 5px; }
.infill { margin-top: 3px; }
.short { width: 120px; margin-left: 3px; }
.short select { padding-left: 9px; }
.brim { margin-left: 25px; }
.check { appearance: none; width: 22px; height: 22px; margin-left: 3px; border: 2px solid #999; border-radius: 2px; }
.purge { height: 33px; margin-left: auto; padding: 2px 6px 0; background: #e2e2e2; }
.objects { height: 270px; margin-top: 8px; border: 1px solid #606060; border-right: 0; }
.objects table { width: 100%; border-collapse: collapse; table-layout: fixed; }
.objects th { height: 32px; padding: 2px 0 0; font-weight: 400; border-left: 1px solid #e4e4e4; }
.objects .c-name { width: 299px; text-align: left; padding-left: 6px; border: 0; }
.c-eye { width: 45px; }
.c-ext { width: 120px; }
.objects td { height: 34px; padding: 0; text-align: center; }
.objects td svg { margin: auto; }
.objects .name { padding-left: 27px; text-align: left; }
.objects .c-edit { padding-left: 4px; }
.ext { display: flex; align-items: center; gap: 4px; padding-left: 4px; }
.ext-sw { width: 48px; height: 24px; background: #000; border: 1px solid #606060; }
.info { margin: 9px 0 0; padding: 3px 0 0 7px; border: 1px solid #d8d8d8; border-width: 1px 0 0 1px; }
.info legend { padding: 0 2px; margin-left: -1px; font-weight: 700; }
.info table { border-collapse: collapse; line-height: 25px; }
.info th { width: 301px; padding: 0; font-weight: 400; text-align: left; }
.info td { padding: 0; vertical-align: top; }
.info .sub { padding-left: 20px; }
.note { display: block; padding-left: 10px; }
.group > * { padding-top: 6px !important; }
sup { font-size: 11px; line-height: 0; }
.scrollbar { display: flex; flex-direction: column; width: 25px; background: #f0f0f0; }
.scrollbar svg { width: 24px; height: 26px; }
.thumb { height: 85%; background: #cdcdcd; }
.scrollbar .down { margin-top: auto; }
.actions { display: flex; gap: 7px; padding: 8px 0 7px; }
.export { flex: 1; height: 48px; justify-content: center; padding-top: 2px; background: #e2e2e2; font-weight: 700; }
.send { width: 48px; background: #e2e2e2; }
.send svg { width: 48px; height: 48px; }

.taskbar { display: flex; height: 60px; background: #262626; color: #fff; }
.start { width: 72px; justify-content: center; }
.search { display: flex; align-items: center; gap: 17px; width: 432px; padding-left: 16px; background: #f1f1f1; border: 2px solid #c0c0c0; }
.search input { width: 300px; padding-top: 3px; font-size: 20px; outline: 0; }
.search input::placeholder { color: #333; opacity: 1; }
.apps { display: flex; }
.app { position: relative; width: 61px; justify-content: center; }
.app.taskview { width: 70px; margin-right: 6px; }
.app svg { width: 36px; height: 36px; }
.open::after { content: ""; position: absolute; left: 7px; right: 7px; bottom: 0; height: 3px; background: #76b9ed; }
.current { background: #626262; }
.current::after { left: 0; right: 0; }
.gls { font: 800 14px "Open Sans", sans-serif; fill: #fff; }
.fus-f { font: 700 19px "Open Sans", sans-serif; fill: #fff; }
.fus { font: 700 8px "Open Sans", sans-serif; fill: #fff; }
.tray { display: flex; margin-left: auto; }
.tray button { justify-content: center; }
.weather { gap: 12px; margin-right: 29px; font-size: 20px; }
.weather span { padding-top: 3px; }
.t-up { width: 48px; }
.t-cam { width: 48px; }
.t-vol { width: 48px; }
.t-bat { width: 50px; }
.t-pen { width: 57px; }
.tray .clock { width: 118px; flex-direction: column; padding-top: 2px; line-height: 28px; }
.notes { width: 66px; }
.peek { width: 11px; border-left: 2px solid #666; }
.badge { font: 15px "Open Sans", sans-serif; fill: #fff; }
.count { font: 700 16px "Open Sans", sans-serif; fill: #fff; }
```
FILE: bed.js
```js
// Draws the 10 mm grid of the 220 x 220 bed through the camera's perspective.
const corners = [[230, 221], [912, 234], [934, 862], [174, 846]];
const cells = 22;

function project([p0, p1, p2, p3]) {
  const dx1 = p1[0] - p2[0], dx2 = p3[0] - p2[0], sx = p0[0] - p1[0] + p2[0] - p3[0];
  const dy1 = p1[1] - p2[1], dy2 = p3[1] - p2[1], sy = p0[1] - p1[1] + p2[1] - p3[1];
  const det = dx1 * dy2 - dx2 * dy1;
  const g = (sx * dy2 - dx2 * sy) / det;
  const h = (dx1 * sy - sx * dy1) / det;
  const a = p1[0] - p0[0] + g * p1[0], b = p3[0] - p0[0] + h * p3[0];
  const d = p1[1] - p0[1] + g * p1[1], e = p3[1] - p0[1] + h * p3[1];
  return (u, v) => {
    const w = g * u + h * v + 1;
    return ((a * u + b * v + p0[0]) / w).toFixed(1) + " " + ((d * u + e * v + p0[1]) / w).toFixed(1);
  };
}

const at = project(corners);
let path = "";
for (let i = 0; i <= cells; i++) {
  const t = i / cells;
  path += "M" + at(t, 0) + "L" + at(t, 1) + "M" + at(0, t) + "L" + at(1, t);
}
document.getElementById("bed-grid").setAttribute("d", path);
```
